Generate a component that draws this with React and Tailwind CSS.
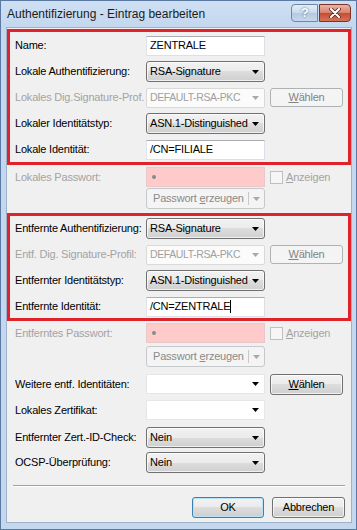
import React from "react";

function Arrow({ disabled }) {
  return (
    <svg width="7" height="4" viewBox="0 0 7 4" className="shrink-0">
      <polygon points="0,0 7,0 3.5,4" fill={disabled ? "#a9a9a9" : "#000"} />
    </svg>
  );
}

function Label({ children, disabled }) {
  return (
    <div className={`w-[131px] shrink-0 whitespace-nowrap overflow-hidden ${disabled ? "text-[#a3a3a3]" : "text-black"}`}>
      {children}
    </div>
  );
}

function Combo({ value, h = "h-[21px]" }) {
  return (
    <div className={`w-[119px] ${h} shrink-0 rounded-[3px] border border-[#707070] bg-[linear-gradient(to_bottom,#f2f2f2,#ebebeb_50%,#dddddd_50%,#cfcfcf)] shadow-[inset_0_0_0_1px_rgba(255,255,255,0.7)] flex items-center justify-between pl-[3px] pr-[5px]`}>
      <span>{value}</span>
      <Arrow />
    </div>
  );
}

function EditCombo({ h = "h-[20px]" }) {
  return (
    <div className={`w-[119px] ${h} shrink-0 bg-white border border-[#e6e6e6] flex items-center justify-end pr-[5px]`}>
      <Arrow />
    </div>
  );
}

function DisabledCombo({ value }) {
  return (
    <div className="w-[119px] h-[20px] shrink-0 border border-[#d9d9d9] rounded-[2px] bg-[#fbfbfb] flex items-center justify-between pl-[3px] pr-[5px] text-[#a0a0a0]">
      <span className="whitespace-nowrap w-[99px] text-[10.5px] tracking-[-0.4px]">{value}</span>
      <Arrow disabled />
    </div>
  );
}

function TextInput({ value, h = "h-[20px]", caret }) {
  return (
    <div className={`w-[119px] ${h} shrink-0 bg-white border border-[#dbdfe6] border-t-[#abadb3] border-l-[#e2e3ea] flex items-center pl-[3px]`}>
      <span>{value}</span>
      {caret && <span className="w-px h-[13px] bg-black" />}
    </div>
  );
}

function Button({ children, disabled, isDefault, w = "w-[73px]" }) {
  if (disabled) {
    return (
      <div className={`${w} h-[19px] shrink-0 rounded-[3px] border border-[#adb2b5] bg-[#f4f4f4] flex items-center justify-center text-[#838383]`}>
        {children}
      </div>
    );
  }
  return (
    <div
      className={`${w} h-[21px] shrink-0 rounded-[3px] border ${isDefault ? "border-[#3c7fb1] shadow-[inset_0_0_0_1px_#b8e2f8]" : "border-[#707070] shadow-[inset_0_0_0_1px_rgba(255,255,255,0.7)]"} bg-[linear-gradient(to_bottom,#f2f2f2,#ebebeb_50%,#dddddd_50%,#cfcfcf)] flex items-center justify-center text-black`}
    >
      {children}
    </div>
  );
}

function PasswordRow({ label }) {
  return (
    <div className="flex items-center h-[20px]">
      <Label disabled>{label}</Label>
      <div className="w-[119px] h-[20px] shrink-0 bg-[#ffcaca] border border-[#e8c8c8] flex items-center pl-[5px]">
        <span className="w-[4px] h-[4px] rounded-full bg-[#8a8a8a]" />
      </div>
      <div className="ml-[5px] w-[13px] h-[13px] border border-[#c0c0c0] bg-[#f6f6f6]" />
      <span className="ml-[3px] text-[#a3a3a3]">
        <span className="underline">A</span>nzeigen
      </span>
    </div>
  );
}

function SplitRow() {
  return (
    <div className="flex items-center h-[21px] pl-[131px]">
      <div className="w-[119px] h-[21px] shrink-0 rounded-[3px] border border-[#c5c9cc] bg-[#f4f4f4] flex items-center text-[#8a8a8a]">
        <span className="w-[100px] pl-[6px] whitespace-nowrap">
          Passwort <span className="underline">e</span>rzeugen
        </span>
        <span className="w-px h-[13px] bg-[#c8c8c8] ml-[1px]" />
        <span className="ml-[4px]"><Arrow disabled /></span>
      </div>
    </div>
  );
}

function Row({ label, disabled, children, h = "h-[21px]" }) {
  return (
    <div className={`flex items-center ${h}`}>
      <Label disabled={disabled}>{label}</Label>
      {children}
    </div>
  );
}

export default function App() {
  return (
    <div className="w-[357px] h-[530px] flex flex-col bg-[#c4d7ed] border border-[#5a7aa3] font-['Liberation_Sans',Arial,sans-serif] text-[11px] tracking-[-0.2px] overflow-hidden">
      {/* title bar */}
      <div className="h-[26px] shrink-0 flex items-center justify-between pl-[6px] pr-[5px] bg-[linear-gradient(to_bottom,#cfe0f3,#c3d7ee)]">
        <span className="text-[12px] tracking-normal text-[#1b1b1b]">Authentifizierung - Eintrag bearbeiten</span>
        <div className="flex items-start gap-[1px] self-start mt-[3px]">
          <div className="w-[27px] h-[18px] rounded-l-[4px] border border-[#6f87a6] bg-[linear-gradient(to_bottom,#e4edf7,#c9d9ec_50%,#b3c8e1_50%,#c6d8ee)] flex items-center justify-center text-white font-bold text-[13px] [text-shadow:0_0_2px_#3e5673]">
            ?
          </div>
          <div className="w-[32px] h-[18px] rounded-r-[4px] border border-[#7a3326] bg-[linear-gradient(to_bottom,#eab3a6,#d8806b_50%,#c44b31_50%,#d47459)] flex items-center justify-center">
            <svg width="12" height="10" viewBox="0 0 12 10">
              <path d="M2 1 L10 9 M10 1 L2 9" stroke="#4b1c12" strokeWidth="3.6" strokeLinecap="round" />
              <path d="M2 1 L10 9 M10 1 L2 9" stroke="#fff" strokeWidth="2.2" strokeLinecap="round" />
            </svg>
          </div>
        </div>
      </div>

      {/* client area */}
      <div className="flex-1 ml-[5px] mr-[4px] mb-[6px] border border-[#9cb2cc] bg-[#f0f0f0] flex flex-col">
        {/* red box 1 */}
        <div className="mt-[1px] border-[3px] border-[#e0222b] pt-[3px] pb-[2px] pl-[5px] flex flex-col gap-[5px]">
          <Row label="Name:" h="h-[21px]">
            <TextInput value="ZENTRALE" h="h-[20px]" />
          </Row>
          <Row label="Lokale Authentifizierung:">
            <Combo value="RSA-Signature" />
          </Row>
          <Row label="Lokales Dig.Signature-Prof." disabled>
            <DisabledCombo value="DEFAULT-RSA-PKC" />
            <div className="ml-[5px]">
              <Button disabled>
                <span><span className="underline">W</span>ählen</span>
              </Button>
            </div>
          </Row>
          <Row label="Lokaler Identitätstyp:">
            <Combo value="ASN.1-Distinguished" />
          </Row>
          <Row label="Lokale Identität:">
            <TextInput value="/CN=FILIALE" />
          </Row>
        </div>

        <div className="pl-[8px] mt-[2px]">
          <PasswordRow label="Lokales Passwort:" />
        </div>
        <div className="pl-[8px] mt-[1px]">
          <SplitRow />
        </div>

        {/* red box 2 */}
        <div className="mt-[4px] border-[3px] border-[#e0222b] pt-[2px] pb-[1px] pl-[5px] flex flex-col gap-[5px]">
          <Row label="Entfernte Authentifizierung:">
            <Combo value="RSA-Signature" />
          </Row>
          <Row label="Entf. Dig. Signature-Profil:" disabled>
            <DisabledCombo value="DEFAULT-RSA-PKC" />
            <div className="ml-[5px]">
              <Button disabled>
                <span><span className="underline">W</span>ählen</span>
              </Button>
            </div>
          </Row>
          <Row label="Entfernter Identitätstyp:">
            <Combo value="ASN.1-Distinguished" />
          </Row>
          <Row label="Entfernte Identität:">
            <TextInput value="/CN=ZENTRALE" caret />
          </Row>
        </div>

        <div className="pl-[8px] mt-[2px]">
          <PasswordRow label="Entferntes Passwort:" />
        </div>
        <div className="pl-[8px] mt-[3px]">
          <SplitRow />
        </div>

        <div className="pl-[8px] mt-[7px] flex flex-col">
          <Row label="Weitere entf. Identitäten:" h="h-[20px]">
            <EditCombo />
            <div className="ml-[5px]">
              <Button>
                <span><span className="underline">W</span>ählen</span>
              </Button>
            </div>
          </Row>
          <div className="mt-[6px]">
            <Row label="Lokales Zertifikat:" h="h-[20px]">
              <EditCombo />
            </Row>
          </div>
          <div className="mt-[7px]">
            <Row label="Entfernter Zert.-ID-Check:">
              <Combo value="Nein" />
            </Row>
          </div>
          <div className="mt-[4px]">
            <Row label="OCSP-Überprüfung:">
              <Combo value="Nein" />
            </Row>
          </div>
        </div>

        {/* separator */}
        <div className="mt-[12px] ml-[6px] mr-[6px] border-t border-[#a0a0a0] border-b border-b-white" />

        <div className="mt-[10px] flex justify-end gap-[8px] pr-[6px]">
          <Button isDefault w="w-[72px]">OK</Button>
          <Button>Abbrechen</Button>
        </div>
      </div>
    </div>
  );
}
